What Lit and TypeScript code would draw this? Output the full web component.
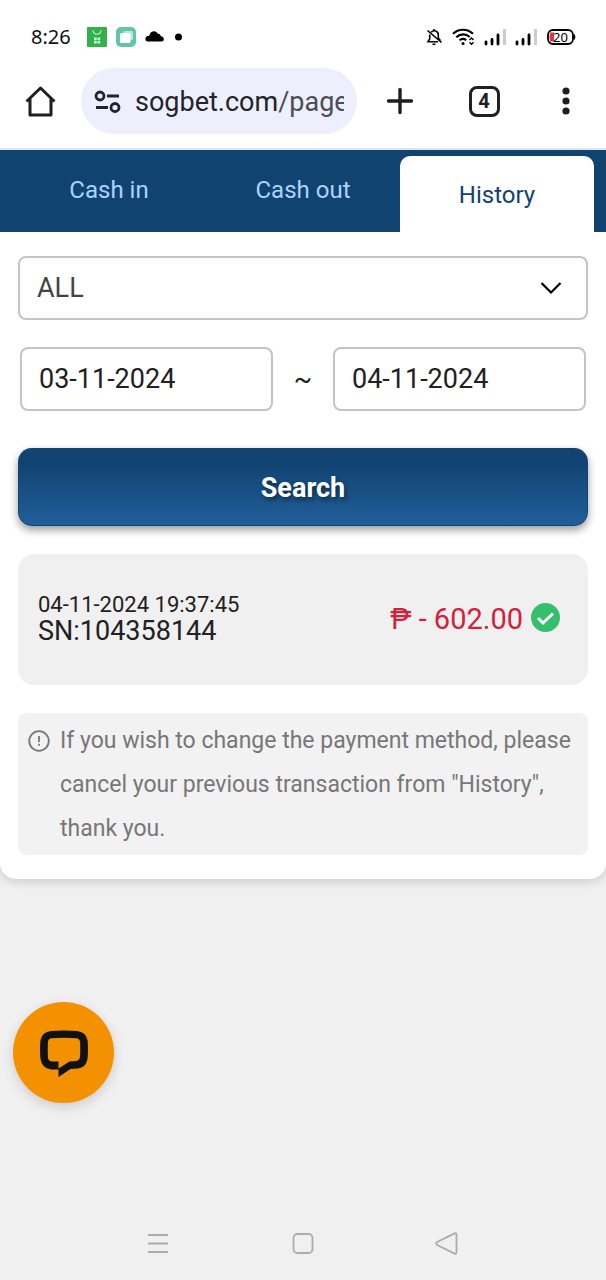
import { LitElement, html, css, svg } from "lit";
import { customElement, state } from "lit/decorators.js";

const signal = svg`
  <path d="M2 14v2M8 11.500v4.500M14 7v9" stroke="#000" stroke-width="2.800" stroke-linecap="round" />
  <path d="M20.500 1v16" stroke="#ccc" stroke-width="3" />
`;

@customElement("status-bar")
class StatusBar extends LitElement {
  static styles = css`
    :host {
      display: flex;
      justify-content: space-between;
      align-items: center;
      height: 68px;
      padding: 6px 30px 0 31px;
      box-sizing: border-box;
      font: 20px/28px "Noto Sans", sans-serif;
      color: #111;
    }
    .group {
      display: flex;
      align-items: center;
      gap: 9px;
    }
    .apps {
      display: flex;
      align-items: center;
      gap: 9px;
      margin-left: 7px;
    }
    svg {
      display: block;
      flex: none;
    }
    .level {
      font-size: 13px;
    }
  `;
  render() {
    return html`
      <div class="group">
        <span>8:26</span>
        <div class="apps">
          <svg width="20" height="20" viewBox="0 0 20 20">
            <rect width="20" height="20" rx="1" fill="#30b14c" />
            <path d="M6 3.500c1 5 7 5 8 0" fill="none" stroke="#d6f5d9" stroke-width="1.200" />
            <path d="M7 10.500h2.700v2.700H7zM10.500 10.500h2.700v2.700h-2.700zM7 14h2.700v2.500H7zM10.500 14h2.700v2.500h-2.700z" fill="#d6f5d9" />
          </svg>
          <svg width="20" height="20" viewBox="0 0 20 20">
            <rect width="20" height="20" rx="5" fill="#61c6a5" />
            <rect x="7" y="4" width="10" height="9" rx="1.500" fill="#b9e8d8" />
            <rect x="4" y="6" width="10.500" height="10" rx="1.500" fill="#fff" />
          </svg>
          <svg width="20" height="20" viewBox="0 0 20 20">
            <path d="M3 14.500a2.800 2.800 0 0 1 .4-5.600c.8-.2 1-.3 1.300-1.300 1.200-4 6.300-4.400 7.800-1.200 2 0 3 1.400 3.400 2.800 3.800.4 3.800 5.300.8 5.300z" fill="#000" />
          </svg>
          <svg width="8" height="20" viewBox="0 0 8 20"><circle cx="4.500" cy="10" r="3.500" /></svg>
        </div>
      </div>
      <div class="group">
        <svg width="18" height="18" viewBox="0 0 18 18" fill="none" stroke="#000" stroke-width="1.600">
          <path d="M6.200 4.300A4 4 0 0 1 13.300 7v3M4.700 6.500V11L3 13.700h10M9 1v2M2.500 2.500l14 12M7.500 16.200h3M13.300 10l2.200 2.700" />
        </svg>
        <svg width="23" height="18" viewBox="0 0 23 18" fill="none" stroke="#000" stroke-width="2.100">
          <path d="M1 5.800C6.500.3 15.500.3 21 5.800M4.300 9.200c4-3.700 9.600-3.700 13.400-.2M7.500 12.300c2-1.600 4.700-1.700 6.700-.2" />
          <circle cx="11" cy="15.500" r="1.500" fill="#000" stroke="none" />
          <path d="M17.500 12l2-2 2 2M17.500 14.300l2 2 2-2" stroke-width="1.400" />
        </svg>
        <svg width="22" height="18" viewBox="0 0 22 18">${signal}</svg>
        <svg width="22" height="18" viewBox="0 0 22 18">${signal}</svg>
        <svg class="level" width="30" height="18" viewBox="0 0 30 18">
          <rect x="2" y="2" width="25" height="14" rx="5" fill="#fff" stroke="#000" stroke-width="1.800" />
          <path d="M4 4.500h4v9H4q-1-4.500 0-9z" fill="#e0354a" />
          <path d="M28 6.500q2 2.500 0 5z" fill="#000" stroke="#000" />
          <text x="7" y="13.500">20</text>
        </svg>
      </div>
    `;
  }
}

@customElement("browser-bar")
class BrowserBar extends LitElement {
  static styles = css`
    :host {
      display: grid;
      grid-template-columns: 81px minmax(0, 1fr) 86px 82px 81px;
      padding-bottom: 14px;
      border-bottom: 2px solid #dbe5ef;
    }
    button {
      display: flex;
      align-items: center;
      justify-content: center;
      border: 0;
      padding: 0;
      background: none;
      height: 66px;
      font: 500 20px/24px Roboto, sans-serif;
      color: #1f1f1f;
    }
    svg {
      display: block;
      flex: none;
    }
    .address {
      justify-content: flex-start;
      gap: 14px;
      padding: 2px 13px 0;
      border-radius: 33px;
      background: #edf0fc;
      font: 27px/36px Roboto, sans-serif;
      text-align: left;
    }
    .url {
      flex: 1;
      min-width: 0;
      overflow: hidden;
      white-space: nowrap;
      color: #22242b;
    }
    .path {
      color: #4a4d55;
    }
    .count {
      box-sizing: border-box;
      width: 31px;
      height: 31px;
      border: 3px solid #1f1f1f;
      border-radius: 8px;
      font-weight: 700;
    }
  `;
  render() {
    return html`
      <button aria-label="Home">
        <svg width="32" height="32" viewBox="0 0 32 32" fill="none" stroke="#1f1f1f" stroke-width="3" stroke-linejoin="round">
          <path d="M1.500 16.500L15.500 3l14 13.500M5 14v16h21V14" />
        </svg>
      </button>
      <button class="address">
        <svg width="27" height="24" viewBox="0 0 27 24" fill="none" stroke="#22242b" stroke-width="2.800">
          <circle cx="6" cy="6" r="4" /><path d="M13 6h12M2 17.500h12" /><circle cx="21" cy="17.500" r="4" />
        </svg>
        <span class="url">sogbet.com<span class="path">/page</span></span>
      </button>
      <button aria-label="New tab">
        <svg width="28" height="28" viewBox="0 0 28 28" stroke="#1f1f1f" stroke-width="3.400" stroke-linecap="round">
          <path d="M14 2.500v23M2.500 14h23" />
        </svg>
      </button>
      <button aria-label="Open tabs"><span class="count">4</span></button>
      <button aria-label="Menu">
        <svg width="8" height="28" viewBox="0 0 8 28" fill="#1f1f1f">
          <circle cx="4" cy="4" r="3.600" /><circle cx="4" cy="14" r="3.600" /><circle cx="4" cy="24" r="3.600" />
        </svg>
      </button>
    `;
  }
}

@customElement("app-root")
class AppRoot extends LitElement {
  @state() active = "History";

  static styles = css`
    :host {
      display: flex;
      flex-direction: column;
      min-height: 100vh;
      position: relative;
      background: #f0f0f0;
      font-family: Roboto, sans-serif;
      color: #212121;
    }
    header {
      background: #fff;
    }
    button,
    input,
    select {
      font-family: inherit;
      box-sizing: border-box;
      margin: 0;
    }
    svg {
      display: block;
      flex: none;
    }
    .tabs {
      display: grid;
      grid-template-columns: repeat(3, 1fr);
      height: 82px;
      padding: 0 12px;
      background: #114371;
    }
    .tab {
      border: 0;
      padding: 0 0 2px;
      background: none;
      font-size: 24px;
      line-height: 28px;
      color: #a9d3fa;
    }
    .tab.active {
      margin-top: 6px;
      padding: 2px 0 0;
      border-radius: 10px 10px 0 0;
      background: #fff;
      color: #114371;
    }
    .panel {
      display: flex;
      flex-direction: column;
      padding: 24px 18px;
      background: #fff;
      border-radius: 0 0 16px 16px;
      box-shadow: 0 3px 10px rgba(0, 0, 0, 0.15);
      clip-path: inset(0 0 -20px);
    }
    .picker {
      display: grid;
      align-items: center;
    }
    .picker > * {
      grid-area: 1 / 1;
    }
    .chevron {
      justify-self: end;
      margin-right: 26px;
      pointer-events: none;
    }
    .field {
      width: 100%;
      height: 64px;
      padding: 0 18px;
      border: 2px solid #c4c4c4;
      border-radius: 8px;
      background: #fff;
      font-size: 27px;
      color: #212121;
      appearance: none;
    }
    .picker .field {
      color: #444;
      padding: 0 17px;
    }
    .dates {
      display: grid;
      grid-template-columns: 1fr 60px 1fr;
      align-items: center;
      margin: 27px 2px 37px;
      text-align: center;
      font-size: 27px;
    }
    .dates .field {
      padding: 0 17px;
    }
    .search {
      height: 78px;
      padding: 2px 0 0;
      border: 1px solid #114371;
      border-top: 0;
      border-radius: 14px;
      background: linear-gradient(#114371 20%, #215f9a);
      box-shadow: 0 4px 8px rgba(0, 0, 0, 0.4);
      font-size: 27px;
      font-weight: 700;
      color: #fff;
      text-shadow: 2px 3px 4px rgba(0, 0, 0, 0.45);
    }
    .record {
      display: flex;
      align-items: center;
      justify-content: space-between;
      margin: 28px 0;
      padding: 38px 28px 40px 20px;
      border-radius: 16px;
      background: #f0f0f0;
    }
    .when {
      font-size: 22px;
      line-height: 26px;
    }
    .serial {
      font-size: 27px;
      line-height: 27px;
    }
    .amount {
      display: flex;
      align-items: center;
      gap: 8px;
      font-size: 29px;
      line-height: 32px;
      color: #d3213d;
    }
    .note {
      display: flex;
      gap: 10px;
      padding: 6px 10px 4px;
      border-radius: 8px;
      background: #f2f2f2;
      font-size: 23px;
      line-height: 44px;
      color: #777;
    }
    .note svg {
      margin-top: 11px;
    }
    .note p {
      margin: 0;
    }
    .chat {
      position: absolute;
      left: 13px;
      bottom: 177px;
      display: grid;
      place-items: center;
      width: 101px;
      height: 101px;
      padding: 0;
      border: 0;
      border-radius: 50%;
      background: #f39100;
      box-shadow: 0 4px 12px rgba(0, 0, 0, 0.15);
    }
    .system {
      display: flex;
      justify-content: center;
      gap: 120px;
      margin-top: auto;
      padding-bottom: 23px;
    }
    .system button {
      padding: 0;
      border: 0;
      background: none;
    }
  `;

  render() {
    return html`
      <header>
        <status-bar></status-bar>
        <browser-bar></browser-bar>
      </header>
      <nav class="tabs">
        ${["Cash in", "Cash out", "History"].map(
          (name) => html`<button class="tab ${name === this.active ? "active" : ""}" @click=${() => (this.active = name)}>${name}</button>`
        )}
      </nav>
      <main class="panel">
        <div class="picker">
          <select class="field" aria-label="Transaction type">
            <option>ALL</option>
          </select>
          <svg class="chevron" width="22" height="14" viewBox="0 0 22 14" fill="none" stroke="#000" stroke-width="2.200">
            <path d="M1.500 2L11 11.500 20.500 2" />
          </svg>
        </div>
        <div class="dates">
          <input class="field" aria-label="From date" value="03-11-2024" />
          <span>~</span>
          <input class="field" aria-label="To date" value="04-11-2024" />
        </div>
        <button class="search">Search</button>
        <section class="record">
          <div>
            <div class="when">04-11-2024 19:37:45</div>
            <div class="serial">SN:104358144</div>
          </div>
          <div class="amount">
            <span>₱ - 602.00</span>
            <svg width="29" height="32" viewBox="0 0 29 32">
              <circle cx="14.500" cy="14.500" r="14.500" fill="#34bf6c" />
              <path d="M7 15l5 5L22 10.500" fill="none" stroke="#fff" stroke-width="3" />
            </svg>
          </div>
        </section>
        <section class="note">
          <svg width="22" height="22" viewBox="0 0 22 22" fill="none" stroke="#777" stroke-width="1.800">
            <circle cx="11" cy="11" r="9.800" /><path d="M11 6v6M11 13.800v2" />
          </svg>
          <p>If you wish to change the payment method, please cancel your previous transaction from "History", thank you.</p>
        </section>
      </main>
      <button class="chat" aria-label="Chat">
        <svg width="48" height="48" viewBox="0 0 48 48">
          <path
            fill="#111"
            fill-rule="evenodd"
            d="M11 2Q24 1 37 2Q46 3 47.500 11Q48.500 20.500 47.500 30Q46 38.500 38 39.500L30.500 40L18.500 48V40.500H11Q2 39.500 .500 30Q-.500 20.500 .500 11Q2 3 11 2zM12 9.200Q8.500 9.500 8 12.500Q7.500 20 8 29Q8.500 32 12 32.500H18.500V39.500L29.500 32.500L36 32Q39.500 31.500 40 28Q40.500 20 40 12.500Q39.500 9.500 36 9.200Q24 8.500 12 9.200z"
          />
        </svg>
      </button>
      <footer class="system">
        <button aria-label="Recent apps">
          <svg width="24" height="26" viewBox="0 0 24 26" stroke="#acacac" stroke-width="1.800"><path d="M1 4h20M1 12.500h20M1 21h20" /></svg>
        </button>
        <button aria-label="Home screen">
          <svg width="24" height="26" viewBox="0 0 24 26" fill="none" stroke="#acacac" stroke-width="1.800"><rect x="2.500" y="3" width="19" height="19" rx="4" /></svg>
        </button>
        <button aria-label="Back">
          <svg width="24" height="26" viewBox="0 0 24 26" fill="none" stroke="#acacac" stroke-width="1.800" stroke-linejoin="round">
            <path d="M19 2.600Q21.500 1.500 21.500 4v17Q21.500 23.500 19 22.400L2.200 14Q0 12.500 2.200 11z" />
          </svg>
        </button>
      </footer>
    `;
  }
}
